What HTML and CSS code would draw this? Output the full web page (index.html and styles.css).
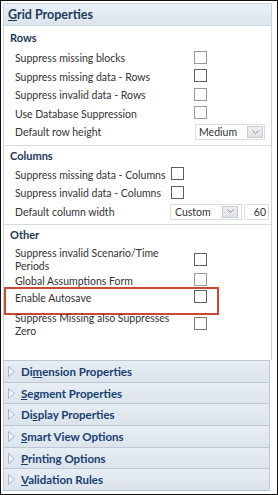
FILE: index.html
```html
<!DOCTYPE html>
<html>
<head>
<meta charset="utf-8">
<title>Grid Properties</title>
<link rel="stylesheet" href="styles.css">
</head>
<body>
<div class="frame">
  <div class="panel">
    <div class="panel-head"><span class="title"><u>G</u>rid Properties</span></div>
    <div class="panel-body">
      <section class="group group-rows">
        <div class="group-head">Rows</div>
        <div class="row"><span class="label">Suppress missing blocks</span><span class="cb"></span></div>
        <div class="row"><span class="label">Suppress missing data - Rows</span><span class="cb dark"></span></div>
        <div class="row"><span class="label">Suppress invalid data - Rows</span><span class="cb"></span></div>
        <div class="row"><span class="label">Use Database Suppression</span><span class="cb"></span></div>
        <div class="row"><span class="label">Default row height</span>
          <div class="select select-medium"><span class="select-value">Medium</span><span class="select-btn"><svg width="7" height="5" viewBox="0 0 7 5"><polyline points="0.5,0.5 3.5,3.5 6.5,0.5" fill="none" stroke="#8a8f96" stroke-width="1"/></svg></span></div>
        </div>
      </section>
      <section class="group group-cols">
        <div class="group-head">Columns</div>
        <div class="row"><span class="label">Suppress missing data - Columns</span><span class="cb dark"></span></div>
        <div class="row"><span class="label">Suppress invalid data - Columns</span><span class="cb dark"></span></div>
        <div class="row"><span class="label">Default column width</span>
          <div class="select select-custom"><span class="select-value">Custom</span><span class="select-btn"><svg width="7" height="5" viewBox="0 0 7 5"><polyline points="0.5,0.5 3.5,3.5 6.5,0.5" fill="none" stroke="#8a8f96" stroke-width="1"/></svg></span></div>
          <div class="num-input">60</div>
        </div>
      </section>
      <section class="group group-other">
        <div class="group-head">Other</div>
        <div class="row multi first"><span class="label">Suppress invalid Scenario/Time Periods</span><span class="cb dark"></span></div>
        <div class="row multi"><span class="label">Global Assumptions Form</span><span class="cb"></span></div>
        <div class="row multi highlighted"><span class="label">Enable Autosave</span><span class="cb dark"></span></div>
        <div class="row multi"><span class="label">Suppress Missing also Suppresses Zero</span><span class="cb mid"></span></div>
      </section>
    </div>
  </div>
  <div class="accordion">
    <div class="acc-row"><svg class="tri" width="7" height="11" viewBox="0 0 7 11"><polygon points="0.5,0.5 6.3,5.5 0.5,10.5" fill="#f1f4f8" stroke="#a7b6c7" stroke-width="1"/></svg><span>Di<u>m</u>ension Properties</span></div>
    <div class="acc-row"><svg class="tri" width="7" height="11" viewBox="0 0 7 11"><polygon points="0.5,0.5 6.3,5.5 0.5,10.5" fill="#f1f4f8" stroke="#a7b6c7" stroke-width="1"/></svg><span><u>S</u>egment Properties</span></div>
    <div class="acc-row"><svg class="tri" width="7" height="11" viewBox="0 0 7 11"><polygon points="0.5,0.5 6.3,5.5 0.5,10.5" fill="#f1f4f8" stroke="#a7b6c7" stroke-width="1"/></svg><span>Di<u>s</u>play Properties</span></div>
    <div class="acc-row"><svg class="tri" width="7" height="11" viewBox="0 0 7 11"><polygon points="0.5,0.5 6.3,5.5 0.5,10.5" fill="#f1f4f8" stroke="#a7b6c7" stroke-width="1"/></svg><span><u>S</u>mart View Options</span></div>
    <div class="acc-row"><svg class="tri" width="7" height="11" viewBox="0 0 7 11"><polygon points="0.5,0.5 6.3,5.5 0.5,10.5" fill="#f1f4f8" stroke="#a7b6c7" stroke-width="1"/></svg><span><u>P</u>rinting Options</span></div>
    <div class="acc-row"><svg class="tri" width="7" height="11" viewBox="0 0 7 11"><polygon points="0.5,0.5 6.3,5.5 0.5,10.5" fill="#f1f4f8" stroke="#a7b6c7" stroke-width="1"/></svg><span><u>V</u>alidation Rules</span></div>
  </div>
</div>
</body>
</html>
```
FILE: styles.css
```css
* { box-sizing: border-box; }
html, body { margin: 0; padding: 0; background: #fff; }
body {
  font-family: Lato, "Liberation Sans", Arial, sans-serif;
  font-size: 10.5px;
  color: #333;
}
.frame {
  width: 278px;
  height: 495px;
  border: 1px solid #111;
  padding: 2px 4px 3px 2px;
  display: flex;
  flex-direction: column;
  background: #fff;
}
.panel {
  flex: 1;
  width: 269px;
  border: 1px solid #c9d1da;
  border-bottom: none;
  border-radius: 2px 2px 0 0;
  display: flex;
  flex-direction: column;
}
.panel-head {
  height: 22px;
  flex: none;
  border-bottom: 1px solid #cfd7e0;
  background: linear-gradient(#ebf0f6, #dce4ed);
  display: flex;
  align-items: center;
  padding-left: 4px;
}
.title {
  font-weight: bold;
  font-size: 12.5px;
  color: #1c3b5e;
}
.panel-body {
  flex: 1;
  background: #fff;
}
.group + .group { border-top: 1px solid #d5dbe1; }
.group-head {
  display: flex;
  align-items: center;
  padding-left: 6px;
  font-weight: bold;
  font-size: 11px;
  color: #1d3753;
  height: 20px;
}
.group-rows .group-head { height: 23px; }
.group-rows { padding-bottom: 3px; }
.group-cols { padding-bottom: 2.5px; }
.row {
  display: flex;
  align-items: center;
  height: 18.5px;
  padding-left: 11px;
  position: relative;
}
.label { flex: 0 0 179px; }
.group-cols .label { flex-basis: 156px; }
.row.multi {
  height: auto;
  padding-top: 2px;
  padding-bottom: 2px;
  line-height: 13px;
}
.row.multi.first { padding-bottom: 0; }
.row.multi .label { padding-right: 10px; }
.row.highlighted { margin-bottom: 3px; }
.cb {
  width: 13px;
  height: 13px;
  border: 1px solid #9a9a9a;
  background: #fff;
  position: relative;
}
.cb.dark { border-color: #5f5f5f; }
.cb.mid { border-color: #7c7c7c; }
.group-rows .row .cb, .group-cols .row .cb { top: -1px; }
.row.multi .cb { top: -1.5px; }
.row.multi.first .cb { top: 0; }
.highlighted::after {
  content: "";
  position: absolute;
  left: 0;
  top: -2.5px;
  width: 211px;
  height: 24px;
  border: 2px solid #c84a33;
}
.select {
  display: flex;
  align-items: center;
  height: 16px;
  border: 1px solid #d6dde5;
  background: #fff;
  padding-left: 3px;
}
.select-medium { width: 70px; margin-left: 1px; }
.select-custom { width: 72px; margin-left: -1px; padding-left: 4px; }
.select-value { flex: 1; color: #333; line-height: 14px; }
.select-btn {
  width: 16px;
  height: 12px;
  margin-right: 1px;
  background: linear-gradient(#eceef0, #dfe2e6);
  border: 1px solid #c6ccd3;
  display: flex;
  align-items: center;
  justify-content: center;
}
.select-custom .select-btn { margin-right: 3px; }
.num-input {
  width: 25px;
  height: 16px;
  margin-left: 2px;
  border: 1px solid #d6dde5;
  text-align: right;
  padding-right: 2px;
  line-height: 14px;
}
.accordion {
  flex: none;
  width: 267px;
  border-left: 1px solid #c3ccd6;
  border-right: 1px solid #c3ccd6;
  border-bottom: 1px solid #b9c3cf;
}
.acc-row {
  height: 21.67px;
  border-top: 1px solid #bcc7d3;
  background: linear-gradient(#e7edf4, #dbe3ec);
  display: flex;
  align-items: center;
  padding-left: 4px;
  gap: 6px;
  font-weight: bold;
  font-size: 11.5px;
  color: #17406e;
}
.tri { flex: none; }
```
